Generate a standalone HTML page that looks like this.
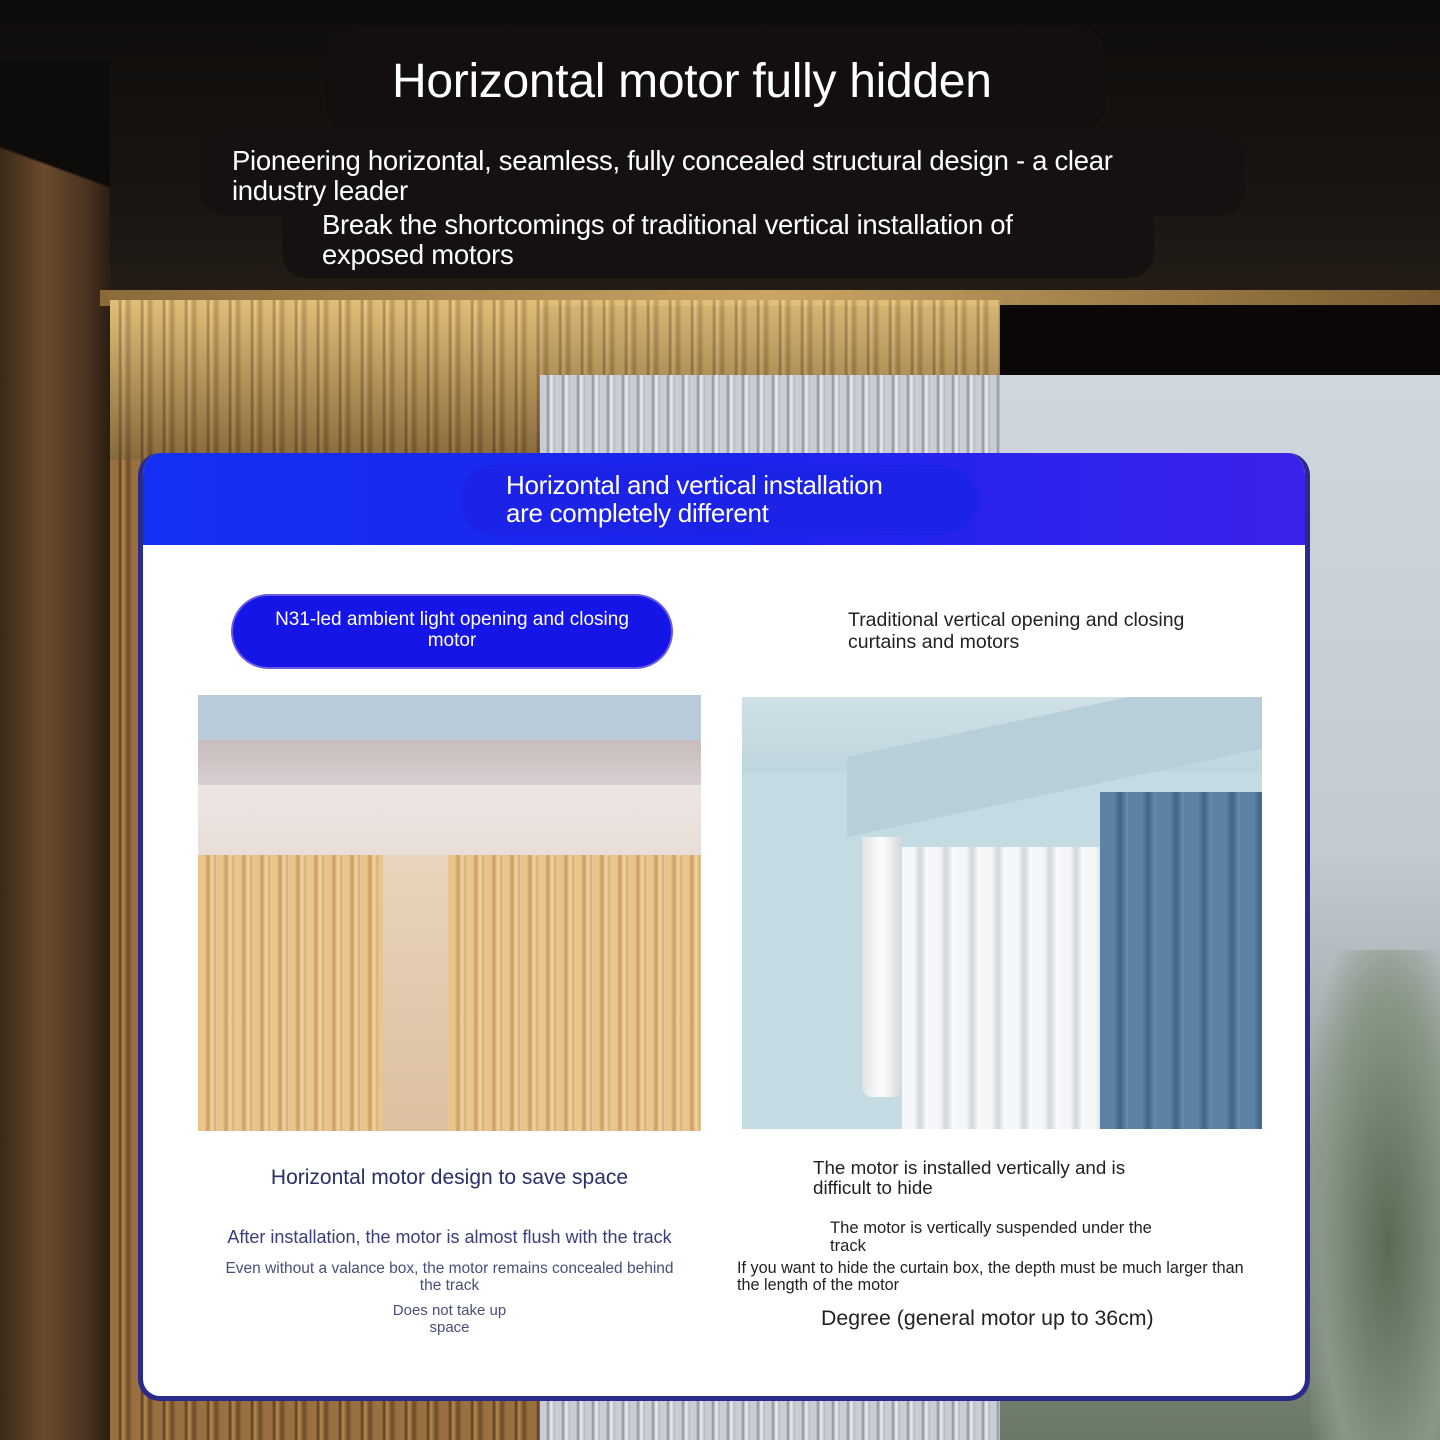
<!DOCTYPE html>
<html><head><meta charset="utf-8"><style>
*{margin:0;padding:0;box-sizing:border-box}
body{width:1440px;height:1440px;position:relative;overflow:hidden;background:#15110e;font-family:"Liberation Sans",sans-serif}
.a{position:absolute}
.t{position:absolute;white-space:nowrap}
</style></head><body>
<!-- background -->
<div class="a" style="left:0;top:0;width:1440px;height:300px;background:linear-gradient(180deg,#0e0c0b,#1a1612 70%,#241d16)"></div>
<div class="a" style="left:0;top:80px;width:110px;height:1360px;background:linear-gradient(90deg,#3a2818,#6b4a2c 40%,#4a3320 80%,#2a1d12)"></div>
<div class="a" style="left:0;top:60px;width:110px;height:240px;background:linear-gradient(200deg,#0e0c0b 45%,transparent 46%)"></div>
<div class="a" style="left:100px;top:290px;width:1340px;height:16px;background:linear-gradient(90deg,#8a6a3a,#c9a565 50%,#7a5a30)"></div>
<div class="a" style="left:110px;top:300px;width:430px;height:1140px;background:repeating-linear-gradient(90deg,#9a7040 0 8px,#5a3a20 10px,#b88a50 13px,#6a4828 18px,#9a7040 22px)"></div>
<div class="a" style="left:110px;top:300px;width:890px;height:160px;background:repeating-linear-gradient(90deg,#d8b66e 0 8px,#8a6534 10px,#f0d08a 13px,#a37b42 18px,#d8b66e 22px);opacity:.92"></div>
<div class="a" style="left:110px;top:300px;width:890px;height:160px;background:linear-gradient(180deg,rgba(255,220,150,.3),rgba(60,35,15,.5))"></div>
<div class="a" style="left:540px;top:375px;width:460px;height:1065px;background:repeating-linear-gradient(90deg,#c8cdd6 0 6px,#8d8f98 8px,#eef0f4 11px,#b0b3ba 15px)"></div>
<div class="a" style="left:1000px;top:305px;width:440px;height:70px;background:#0a0706"></div>
<div class="a" style="left:1000px;top:375px;width:440px;height:1065px;background:linear-gradient(180deg,#cfd6de,#c3cad2 45%,#9aa4a2 70%,#6a7866)"></div>
<div class="a" style="left:1310px;top:950px;width:130px;height:490px;background:radial-gradient(ellipse at 60% 60%,#5a6a54,#8a9888 60%,transparent 85%)"></div>

<!-- top text boxes -->
<div class="a" style="left:325px;top:25px;width:780px;height:110px;border-radius:30px;background:#120f0e"></div>
<div class="a" style="left:200px;top:130px;width:1045px;height:85px;border-radius:25px;background:#141110"></div>
<div class="a" style="left:282px;top:200px;width:872px;height:78px;border-radius:25px;background:#141110"></div>
<div class="t" style="left:392px;top:54px;font-size:48px;color:#fff;letter-spacing:-0.3px">Horizontal motor fully hidden</div>
<div class="t" style="left:232px;top:146px;font-size:27.5px;line-height:30px;color:#fff;letter-spacing:-0.3px">Pioneering horizontal, seamless, fully concealed structural design - a clear<br>industry leader</div>
<div class="t" style="left:322px;top:210px;font-size:27.5px;line-height:30px;color:#fff;letter-spacing:-0.3px">Break the shortcomings of traditional vertical installation of<br>exposed motors</div>

<!-- card -->
<div class="a" style="left:138px;top:453px;width:1172px;height:948px;border-radius:22px;background:#fff;overflow:hidden;border:5px solid #2a2a8a;border-top:0">
 <div class="a" style="left:0;top:0;width:1172px;height:92px;background:linear-gradient(90deg,#1530f2,#1a24ee 50%,#3c22ea)"></div>
</div>
<div class="a" style="left:460px;top:465px;width:517px;height:70px;border-radius:35px;background:#1c22e6"></div>
<div class="t" style="left:506px;top:471px;font-size:26px;line-height:28px;color:#fff;letter-spacing:-0.3px">Horizontal and vertical installation<br>are completely different</div>

<div class="a" style="left:233px;top:596px;width:438px;height:71px;border-radius:36px;background:#1515e8;box-shadow:0 0 0 2px #6a5ae0"></div>
<div class="t" style="left:233px;top:609px;width:438px;text-align:center;font-size:19px;line-height:21px;color:#fff">N31-led ambient light opening and closing<br>motor</div>
<div class="t" style="left:848px;top:609px;font-size:19.5px;line-height:22px;color:#222">Traditional vertical opening and closing<br>curtains and motors</div>

<!-- left image -->
<div class="a" style="left:198px;top:695px;width:503px;height:436px;overflow:hidden;background:#b8c8d6">
 <div class="a" style="left:0;top:0;width:503px;height:45px;background:#b9cad8"></div>
 <div class="a" style="left:0;top:45px;width:503px;height:45px;background:linear-gradient(180deg,#c8bcbc,#d8cfd0)"></div>
 <div class="a" style="left:0;top:90px;width:503px;height:70px;background:linear-gradient(180deg,#ece6e4,#e9ded8)"></div>
 <div class="a" style="left:0;top:160px;width:503px;height:276px;background:linear-gradient(180deg,#e8d4bd,#dcc0a0)"></div>
 <div class="a" style="left:0;top:160px;width:185px;height:276px;background:repeating-linear-gradient(90deg,#e9c48c 0 7px,#c89a5e 10px,#f4d7a4 14px,#d4a870 18px)"></div>
 <div class="a" style="left:250px;top:160px;width:253px;height:276px;background:repeating-linear-gradient(90deg,#e9c48c 0 7px,#c89a5e 10px,#f4d7a4 14px,#d4a870 18px)"></div>
</div>
<!-- right image -->
<div class="a" style="left:742px;top:697px;width:520px;height:432px;overflow:hidden;background:#c4dbe4">
 <div class="a" style="left:0;top:0;width:520px;height:75px;background:linear-gradient(180deg,#cfe0e6,#bfd6de)"></div>
 <div class="a" style="left:105px;top:60px;width:415px;height:80px;background:#b6cfd8;transform:skewY(-12deg);transform-origin:0 100%"></div>
 <div class="a" style="left:120px;top:140px;width:40px;height:260px;border-radius:0 0 10px 10px;background:linear-gradient(90deg,#dfe3e6,#fdfdfd,#d2d7da)"></div>
 <div class="a" style="left:160px;top:150px;width:200px;height:282px;background:repeating-linear-gradient(90deg,#f4f6f8 0 12px,#d0d6dc 18px,#ffffff 26px)"></div>
 <div class="a" style="left:358px;top:95px;width:162px;height:337px;background:repeating-linear-gradient(90deg,#5c82a6 0 14px,#3f6488 20px,#6a8fb2 28px)"></div>
</div>

<div class="t" style="left:198px;top:1166px;width:503px;text-align:center;font-size:21px;color:#2a2e6a">Horizontal motor design to save space</div>
<div class="t" style="left:198px;top:1227px;width:503px;text-align:center;font-size:18px;color:#3a3e7a">After installation, the motor is almost flush with the track</div>
<div class="t" style="left:190px;top:1260px;width:519px;text-align:center;font-size:15.5px;line-height:17px;color:#4a4e7a">Even without a valance box, the motor remains concealed behind<br>the track</div>
<div class="t" style="left:198px;top:1302px;width:503px;text-align:center;font-size:15px;line-height:17px;color:#4a4e7a">Does not take up<br>space</div>

<div class="t" style="left:813px;top:1158px;font-size:18.8px;line-height:20px;color:#222">The motor is installed vertically and is<br>difficult to hide</div>
<div class="t" style="left:830px;top:1219px;font-size:16.6px;line-height:18px;color:#222">The motor is vertically suspended under the<br>track</div>
<div class="t" style="left:737px;top:1260px;font-size:16.2px;line-height:17px;color:#222">If you want to hide the curtain box, the depth must be much larger than<br>the length of the motor</div>
<div class="t" style="left:821px;top:1306px;font-size:21.3px;color:#222">Degree (general motor up to 36cm)</div>
</body></html>
